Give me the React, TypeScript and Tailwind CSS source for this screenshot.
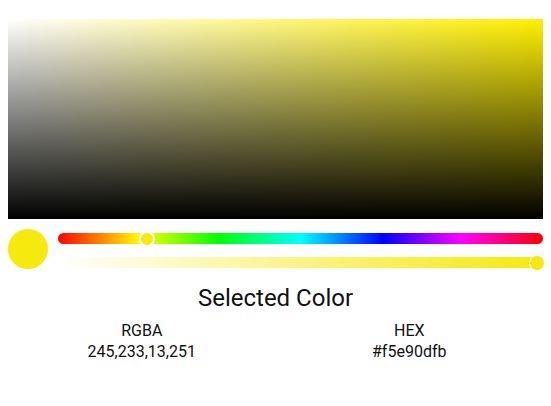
export default function App() {
  return (
    <div className="w-[551px] h-[406px] bg-white px-2 pt-[19px] font-['Roboto',sans-serif] text-[#111]">
      {/* saturation / value area */}
      <div className="relative h-[200px] w-full bg-[#fff000]">
        <div className="absolute inset-0 bg-gradient-to-r from-white to-transparent" />
        <div className="absolute inset-0 bg-gradient-to-b from-transparent to-black" />
      </div>

      <div className="mt-[10px] flex items-start gap-[10px]">
        <div className="h-10 w-10 shrink-0 rounded-full bg-[#f5e90d]" />
        <div className="mt-1 flex flex-1 flex-col gap-[13px]">
          <div className="relative h-[11px] rounded-full bg-[linear-gradient(to_right,#f00_0%,#ff0_17%,#0f0_33%,#0ff_50%,#00f_67%,#f0f_83%,#f00_100%)]">
            <div className="absolute left-[81px] top-1/2 h-4 w-4 -translate-y-1/2 rounded-full border-2 border-white bg-[#f5e90d]" />
          </div>
          <div className="relative h-[11px] rounded-full bg-gradient-to-r from-[#f5e90d00] to-[#f5e90d]">
            <div className="absolute right-[-2px] top-1/2 h-4 w-4 -translate-y-1/2 rounded-full border border-white bg-[#f5e90d]" />
          </div>
        </div>
      </div>

      <div className="mt-[13px] text-center text-2xl leading-8">Selected Color</div>

      <div className="mt-[6px] grid grid-cols-2 text-center text-base leading-[21px]">
        <div>
          <div>RGBA</div>
          <div>245,233,13,251</div>
        </div>
        <div>
          <div>HEX</div>
          <div>#f5e90dfb</div>
        </div>
      </div>
    </div>
  );
}
